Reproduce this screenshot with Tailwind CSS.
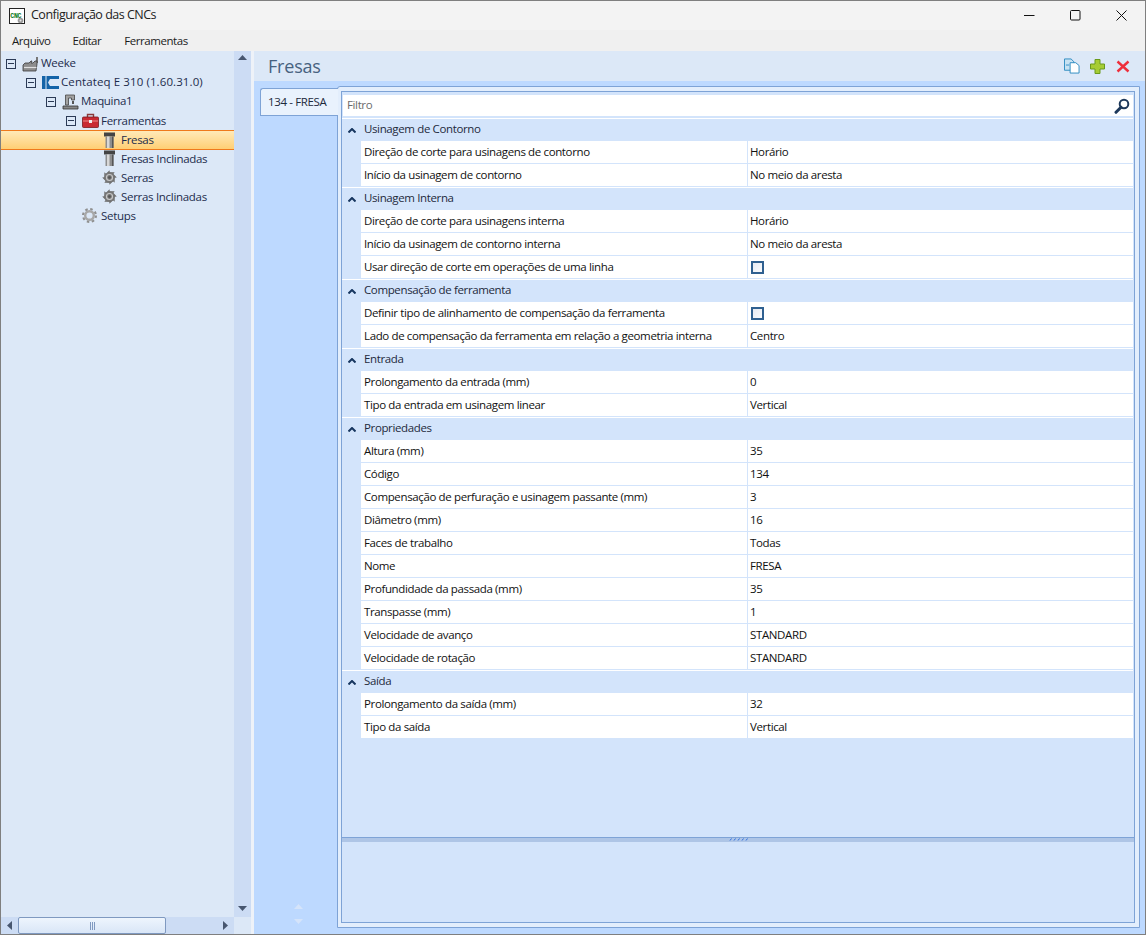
<!DOCTYPE html>
<html lang="pt">
<head>
<meta charset="UTF-8">
<title>Configuração das CNCs</title>
<script src="https://cdn.jsdelivr.net/npm/@tailwindcss/browser@4"></script>
</head>
<body class="bg-[#dce8f7]">
<div class="w-[1146px] h-[935px] flex flex-col overflow-hidden border border-[#7f7f7f] font-['Open_Sans',sans-serif] text-[11.5px] tracking-[-0.37px] text-[#1b1b1b]">

  <!-- title bar -->
  <div class="h-[29px] shrink-0 flex items-center bg-[#f3f3f3]">
    <svg class="ml-[8px] mr-[6px]" width="16" height="16" viewBox="0 0 16 16">
      <rect x="0.500" y="0.500" width="15" height="15" fill="#fff" stroke="#222"/>
      <text x="1.300" y="9.500" font-family="Liberation Mono" font-size="6.500" font-weight="700" fill="#0b7a22" letter-spacing="-0.300">CNC</text>
      <circle cx="11.500" cy="12.500" r="2.800" fill="#9a9a9a"/>
      <circle cx="11.500" cy="12.500" r="1" fill="#e8e8e8"/>
    </svg>
    <span class="text-[12.5px] tracking-[-0.5px] text-[#222]">Configuração das CNCs</span>
    <div class="ml-auto flex">
      <svg class="mr-[35px]" width="11" height="11" viewBox="0 0 11 11"><path d="M0 5.500h10.500" stroke="#111"/></svg>
      <svg class="mr-[35px]" width="11" height="11" viewBox="0 0 11 11"><rect x="0.500" y="0.500" width="9.500" height="9.500" rx="1" fill="none" stroke="#111"/></svg>
      <svg class="mr-[18px]" width="11" height="11" viewBox="0 0 11 11"><path d="M0.500 0.500l10 10M10.500 0.500l-10 10" stroke="#111"/></svg>
    </div>
  </div>

  <!-- menu -->
  <div class="h-[21px] shrink-0 flex items-center gap-[22px] pl-[11px] bg-[#f0f0f0] tracking-[-0.45px]">
    <span>Arquivo</span><span>Editar</span><span class="ml-px">Ferramentas</span>
  </div>

  <div class="flex-1 flex min-h-0">

    <!-- tree panel -->
    <div class="w-[250px] shrink-0 flex flex-col">
      <div class="flex-1 flex min-h-0">
        <div class="w-[233px] pt-[3px] text-[#1c2c4c] tracking-[-0.3px]">
          <div class="h-[19px] flex items-center pl-[5px]">
            <span class="w-[10px] h-[10px] border border-[#2b3a55] mr-[6px] flex items-center justify-center"><span class="w-[6px] h-px bg-[#2b3a55]"></span></span>
            <svg class="mr-[2px]" width="17" height="16" viewBox="0 0 17 16"><path d="M14 1h2v6h-2z" fill="#777"/><path d="M1 9l2-2h4l2-2h1l-1 2h2l2-2h2v3l-1 7H1z" fill="#8d8d8d" stroke="#3b3b3b" stroke-width="0.800"/><path d="M2 11.500h12.500" stroke="#e0e0e0" stroke-width="1.200"/></svg>
            <span class="pb-[2px]">Weeke</span>
          </div>
          <div class="h-[19px] flex items-center pl-[25px]">
            <span class="w-[10px] h-[10px] border border-[#2b3a55] mr-[6px] flex items-center justify-center"><span class="w-[6px] h-px bg-[#2b3a55]"></span></span>
            <svg class="mr-[2px]" width="17" height="13" viewBox="0 0 17 13"><rect width="3.500" height="13" fill="#1464a8"/><path d="M4.500 0H17v3H8L6 6.500 8 10h9v3H4.500z" fill="#1464a8"/></svg>
            <span class="pb-[2px] tracking-[0.1px]">Centateq E 310 (1.60.31.0)</span>
          </div>
          <div class="h-[19px] flex items-center pl-[45px]">
            <span class="w-[10px] h-[10px] border border-[#2b3a55] mr-[6px] flex items-center justify-center"><span class="w-[6px] h-px bg-[#2b3a55]"></span></span>
            <svg class="mr-[2px]" width="17" height="16" viewBox="0 0 17 16"><path d="M3.500 1h9v5h-3V4h-3v7h-3z" fill="#a2a2a2" stroke="#444" stroke-width="0.800"/><path d="M1 12h15v3H1z" fill="#888" stroke="#333" stroke-width="0.800"/><path d="M10 7h2v3h-2z" fill="#555"/></svg>
            <span class="pb-[2px]">Maquina1</span>
          </div>
          <div class="h-[19px] flex items-center pl-[65px]">
            <span class="w-[10px] h-[10px] border border-[#2b3a55] mr-[6px] flex items-center justify-center"><span class="w-[6px] h-px bg-[#2b3a55]"></span></span>
            <svg class="mr-[2px]" width="17" height="15" viewBox="0 0 17 15"><path d="M5.500 4V1.500h6V4" fill="none" stroke="#8a3a3a" stroke-width="1.400"/><rect x="0.500" y="4" width="16" height="10.500" rx="1" fill="#c92a32" stroke="#7a1a1f" stroke-width="0.800"/><path d="M1 8h15" stroke="#f08a8a"/><rect x="7" y="7" width="3" height="3" fill="#eee"/></svg>
            <span>Ferramentas</span>
          </div>
          <div class="h-[20px] flex items-center pl-[101px] border-y border-[#ef7a1c] bg-gradient-to-b from-[#ffeab8] to-[#ffcf73] -mb-px">
            <svg class="mr-[4px]" width="15" height="17" viewBox="0 0 15 17"><use href="#bit"/></svg>
            <span>Fresas</span>
          </div>
          <div class="h-[19px] flex items-center pl-[101px]">
            <svg class="mr-[4px]" width="15" height="17" viewBox="0 0 15 17"><use href="#bit"/></svg>
            <span>Fresas Inclinadas</span>
          </div>
          <div class="h-[19px] flex items-center pl-[101px]">
            <svg class="mr-[4px]" width="15" height="15" viewBox="0 0 15 15"><use href="#saw"/></svg>
            <span>Serras</span>
          </div>
          <div class="h-[19px] flex items-center pl-[101px]">
            <svg class="mr-[4px]" width="15" height="15" viewBox="0 0 15 15"><use href="#saw"/></svg>
            <span>Serras Inclinadas</span>
          </div>
          <div class="h-[19px] flex items-center pl-[81px]">
            <svg class="mr-[4px]" width="15" height="15" viewBox="0 0 15 15"><use href="#gear"/></svg>
            <span>Setups</span>
          </div>
        </div>
        <!-- vertical scrollbar -->
        <div class="w-[17px] bg-[#ccdcf4] flex flex-col items-center justify-between pt-[4px] pb-[6px]">
          <svg width="9" height="5" viewBox="0 0 9 5"><path d="M0 5L4.500 0 9 5z" fill="#47566f"/></svg>
          <svg width="9" height="5" viewBox="0 0 9 5"><path d="M0 0L4.500 5 9 0z" fill="#47566f"/></svg>
        </div>
      </div>
      <!-- horizontal scrollbar -->
      <div class="h-[17px] shrink-0 flex">
        <div class="w-[233px] bg-[#ccdcf4] flex items-center">
          <svg class="ml-[6px] mr-[6px]" width="5" height="9" viewBox="0 0 5 9"><path d="M5 0L0 4.500 5 9z" fill="#47566f"/></svg>
          <div class="w-[148px] h-[17px] border border-[#7f99c0] rounded-[2px] bg-gradient-to-b from-[#eef5fd] to-[#d9e6f7] flex items-center justify-center gap-[1px]">
            <span class="w-px h-[8px] bg-[#7f99c0]"></span><span class="w-px h-[8px] bg-[#7f99c0]"></span><span class="w-px h-[8px] bg-[#7f99c0]"></span>
          </div>
          <svg class="ml-auto mr-[6px]" width="5" height="9" viewBox="0 0 5 9"><path d="M0 0L5 4.500 0 9z" fill="#47566f"/></svg>
        </div>
        <div class="flex-1 bg-[#dce8f7]"></div>
      </div>
    </div>

    <!-- splitter -->
    <div class="w-[3px] shrink-0 bg-[#eef2f8]"></div>

    <!-- right panel -->
    <div class="flex-1 flex flex-col min-w-0">
      <div class="h-[30px] shrink-0 flex items-center pl-[14px] pr-[15px] bg-[#dce8f7]">
        <span class="text-[18px] tracking-[-0.2px] text-[#47627f]">Fresas</span>
        <div class="ml-auto flex items-center gap-[10px]">
          <svg width="16" height="16" viewBox="0 0 17 16"><path d="M0.500 0.500h7l3 3v9h-10z" fill="#c8e2f2" stroke="#2b8ac0"/><path d="M6.500 4.500h6l3.500 3v8h-9.500z" fill="#fff" stroke="#2b8ac0"/><path d="M2 6h4v2H2z" fill="#7cb8dc"/></svg>
          <svg width="15" height="15" viewBox="0 0 15 15"><path d="M5 0.500h5v4.500h4.500v5H10v4.500H5V10H0.500V5H5z" fill="#a6cc34" stroke="#6a9a1c"/></svg>
          <svg class="ml-px" width="14" height="13" viewBox="0 0 14 13"><path d="M1.500 1.500l11 10M12.500 1.500l-11 10" stroke="#ee2f3c" stroke-width="2.400"/></svg>
        </div>
      </div>

      <div class="flex-1 flex min-h-0 bg-[#bdd9ff] pt-[5px] pb-[6px] pr-[5px]">
        <!-- tabs column -->
        <div class="w-[83px] shrink-0 flex flex-col pl-[6px] pt-[2px] relative">
          <div class="h-[28px] -mr-px z-10 bg-[#e9f2fd] border border-r-0 border-[#7ea3d6] rounded-tl-[3px] flex items-center pl-[7px] text-[#1e2a3c]">134 - FRESA</div>
          <div class="mt-auto mb-[4px] flex flex-col items-center gap-[10px] pr-[0px]">
            <svg width="9" height="5" viewBox="0 0 9 5"><path d="M0 5L4.500 0 9 5z" fill="#d5e4fa"/></svg>
            <svg width="9" height="5" viewBox="0 0 9 5"><path d="M0 0L4.500 5 9 0z" fill="#d5e4fa"/></svg>
          </div>
        </div>

        <!-- tab page -->
        <div class="flex-1 min-w-0 border border-[#7ea3d6] rounded-tl-[3px] bg-[#e3eefc] pt-[4px] pl-[3px] pr-[4px] pb-[4px]">
          <div class="h-full border border-[#7ea3d6] bg-[#d3e4fb] flex flex-col">
            <div class="mx-px mt-[3px] h-[21px] shrink-0 bg-white flex items-center pl-[4px] pr-[3px] text-[#6b6b6b]">
              <span class="pb-[2px]">Filtro</span>
              <svg class="ml-auto" width="16" height="16" viewBox="0 0 16 16"><circle cx="10" cy="6" r="4.300" fill="#fff" stroke="#1e395b" stroke-width="2"/><path d="M7 9.200L2 14.300" stroke="#1e395b" stroke-width="3" stroke-linecap="round"/></svg>
            </div>

            <div class="mt-[2px] flex flex-col shrink-0 text-[#111] pr-px">
              <div class="h-[23px] flex items-center border-t border-white text-[#1e2a3c]"><svg class="mx-[6px]" width="8" height="5" viewBox="0 0 8 5"><path d="M0.500 4.500L4 1l3.500 3.500" fill="none" stroke="#17365f" stroke-width="2"/></svg><span class="ml-[2px] pb-[2px]">Usinagem de Contorno</span></div>
              <div class="h-[23px] ml-[19px] flex bg-white border-b border-[#d3e4fb]"><span class="w-[387px] pl-[3px] flex items-center border-r border-[#d3e4fb]">Direção de corte para usinagens de contorno</span><span class="pl-[2px] flex items-center">Horário</span></div>
              <div class="h-[23px] ml-[19px] flex bg-white border-b border-[#d3e4fb]"><span class="w-[387px] pl-[3px] flex items-center border-r border-[#d3e4fb]">Início da usinagem de contorno</span><span class="pl-[2px] flex items-center">No meio da aresta</span></div>

              <div class="h-[23px] flex items-center border-t border-white text-[#1e2a3c]"><svg class="mx-[6px]" width="8" height="5" viewBox="0 0 8 5"><path d="M0.500 4.500L4 1l3.500 3.500" fill="none" stroke="#17365f" stroke-width="2"/></svg><span class="ml-[2px] pb-[2px]">Usinagem Interna</span></div>
              <div class="h-[23px] ml-[19px] flex bg-white border-b border-[#d3e4fb]"><span class="w-[387px] pl-[3px] flex items-center border-r border-[#d3e4fb]">Direção de corte para usinagens interna</span><span class="pl-[2px] flex items-center">Horário</span></div>
              <div class="h-[23px] ml-[19px] flex bg-white border-b border-[#d3e4fb]"><span class="w-[387px] pl-[3px] flex items-center border-r border-[#d3e4fb]">Início da usinagem de contorno interna</span><span class="pl-[2px] flex items-center">No meio da aresta</span></div>
              <div class="h-[23px] ml-[19px] flex bg-white border-b border-[#d3e4fb]"><span class="w-[387px] pl-[3px] flex items-center border-r border-[#d3e4fb]">Usar direção de corte em operações de uma linha</span><span class="pl-[3px] flex items-center"><span class="block w-[13px] h-[13px] border-2 border-[#2f6090] bg-gradient-to-br from-[#e6eaf2] to-[#f8fafd]"></span></span></div>

              <div class="h-[23px] flex items-center border-t border-white text-[#1e2a3c]"><svg class="mx-[6px]" width="8" height="5" viewBox="0 0 8 5"><path d="M0.500 4.500L4 1l3.500 3.500" fill="none" stroke="#17365f" stroke-width="2"/></svg><span class="ml-[2px] pb-[2px]">Compensação de ferramenta</span></div>
              <div class="h-[23px] ml-[19px] flex bg-white border-b border-[#d3e4fb]"><span class="w-[387px] pl-[3px] flex items-center border-r border-[#d3e4fb]">Definir tipo de alinhamento de compensação da ferramenta</span><span class="pl-[3px] flex items-center"><span class="block w-[13px] h-[13px] border-2 border-[#2f6090] bg-gradient-to-br from-[#e6eaf2] to-[#f8fafd]"></span></span></div>
              <div class="h-[23px] ml-[19px] flex bg-white border-b border-[#d3e4fb]"><span class="w-[387px] pl-[3px] flex items-center border-r border-[#d3e4fb]">Lado de compensação da ferramenta em relação a geometria interna</span><span class="pl-[2px] flex items-center">Centro</span></div>

              <div class="h-[23px] flex items-center border-t border-white text-[#1e2a3c]"><svg class="mx-[6px]" width="8" height="5" viewBox="0 0 8 5"><path d="M0.500 4.500L4 1l3.500 3.500" fill="none" stroke="#17365f" stroke-width="2"/></svg><span class="ml-[2px] pb-[2px]">Entrada</span></div>
              <div class="h-[23px] ml-[19px] flex bg-white border-b border-[#d3e4fb]"><span class="w-[387px] pl-[3px] flex items-center border-r border-[#d3e4fb]">Prolongamento da entrada (mm)</span><span class="pl-[2px] flex items-center">0</span></div>
              <div class="h-[23px] ml-[19px] flex bg-white border-b border-[#d3e4fb]"><span class="w-[387px] pl-[3px] flex items-center border-r border-[#d3e4fb]">Tipo da entrada em usinagem linear</span><span class="pl-[2px] flex items-center">Vertical</span></div>

              <div class="h-[23px] flex items-center border-t border-white text-[#1e2a3c]"><svg class="mx-[6px]" width="8" height="5" viewBox="0 0 8 5"><path d="M0.500 4.500L4 1l3.500 3.500" fill="none" stroke="#17365f" stroke-width="2"/></svg><span class="ml-[2px] pb-[2px]">Propriedades</span></div>
              <div class="h-[23px] ml-[19px] flex bg-white border-b border-[#d3e4fb]"><span class="w-[387px] pl-[3px] flex items-center border-r border-[#d3e4fb]">Altura (mm)</span><span class="pl-[2px] flex items-center">35</span></div>
              <div class="h-[23px] ml-[19px] flex bg-white border-b border-[#d3e4fb]"><span class="w-[387px] pl-[3px] flex items-center border-r border-[#d3e4fb]">Código</span><span class="pl-[2px] flex items-center">134</span></div>
              <div class="h-[23px] ml-[19px] flex bg-white border-b border-[#d3e4fb]"><span class="w-[387px] pl-[3px] flex items-center border-r border-[#d3e4fb]">Compensação de perfuração e usinagem passante (mm)</span><span class="pl-[2px] flex items-center">3</span></div>
              <div class="h-[23px] ml-[19px] flex bg-white border-b border-[#d3e4fb]"><span class="w-[387px] pl-[3px] flex items-center border-r border-[#d3e4fb]">Diâmetro (mm)</span><span class="pl-[2px] flex items-center">16</span></div>
              <div class="h-[23px] ml-[19px] flex bg-white border-b border-[#d3e4fb]"><span class="w-[387px] pl-[3px] flex items-center border-r border-[#d3e4fb]">Faces de trabalho</span><span class="pl-[2px] flex items-center">Todas</span></div>
              <div class="h-[23px] ml-[19px] flex bg-white border-b border-[#d3e4fb]"><span class="w-[387px] pl-[3px] flex items-center border-r border-[#d3e4fb]">Nome</span><span class="pl-[2px] flex items-center">FRESA</span></div>
              <div class="h-[23px] ml-[19px] flex bg-white border-b border-[#d3e4fb]"><span class="w-[387px] pl-[3px] flex items-center border-r border-[#d3e4fb]">Profundidade da passada (mm)</span><span class="pl-[2px] flex items-center">35</span></div>
              <div class="h-[23px] ml-[19px] flex bg-white border-b border-[#d3e4fb]"><span class="w-[387px] pl-[3px] flex items-center border-r border-[#d3e4fb]">Transpasse (mm)</span><span class="pl-[2px] flex items-center">1</span></div>
              <div class="h-[23px] ml-[19px] flex bg-white border-b border-[#d3e4fb]"><span class="w-[387px] pl-[3px] flex items-center border-r border-[#d3e4fb]">Velocidade de avanço</span><span class="pl-[2px] flex items-center">STANDARD</span></div>
              <div class="h-[23px] ml-[19px] flex bg-white border-b border-[#d3e4fb]"><span class="w-[387px] pl-[3px] flex items-center border-r border-[#d3e4fb]">Velocidade de rotação</span><span class="pl-[2px] flex items-center">STANDARD</span></div>

              <div class="h-[23px] flex items-center border-t border-white text-[#1e2a3c]"><svg class="mx-[6px]" width="8" height="5" viewBox="0 0 8 5"><path d="M0.500 4.500L4 1l3.500 3.500" fill="none" stroke="#17365f" stroke-width="2"/></svg><span class="ml-[2px] pb-[2px]">Saída</span></div>
              <div class="h-[23px] ml-[19px] flex bg-white border-b border-[#d3e4fb]"><span class="w-[387px] pl-[3px] flex items-center border-r border-[#d3e4fb]">Prolongamento da saída (mm)</span><span class="pl-[2px] flex items-center">32</span></div>
              <div class="h-[23px] ml-[19px] flex bg-white border-b border-[#d3e4fb]"><span class="w-[387px] pl-[3px] flex items-center border-r border-[#d3e4fb]">Tipo da saída</span><span class="pl-[2px] flex items-center">Vertical</span></div>
            </div>

            <div class="flex-1"></div>
            <!-- description splitter -->
            <div class="h-[5px] shrink-0 border-t border-[#7ea3d6] bg-[#aec5e6] flex justify-center">
              <svg width="19" height="3" viewBox="0 0 19 3"><path d="M1 2.500l1.500-2M5 2.500l1.500-2M9 2.500l1.500-2M13 2.500l1.500-2M17 2.500l1.500-2" stroke="#2f6fe0"/></svg>
            </div>
            <div class="h-[80px] shrink-0"></div>
          </div>
        </div>
      </div>
    </div>
  </div>
</div>

<svg width="0" height="0" class="absolute">
  <defs>
    <g id="bit">
      <rect x="2" y="0.500" width="11" height="4" fill="#444"/>
      <path d="M3.500 4.500h8V16h-8z" fill="#8e8e8e"/>
      <path d="M5 4.500h2.500V16H5z" fill="#d8d8d8"/>
      <path d="M10 4.500h1.500V16H10z" fill="#555"/>
    </g>
    <g id="saw">
      <polygon points="14.800,7.500 12.700,7.800 12.660,12.660 10.980,11.360 7.500,14.800 7.230,12.690 2.340,12.660 3.640,10.980 0.200,7.500 2.310,7.230 2.340,2.340 4.020,3.640 7.500,0.200 7.770,2.310 12.660,2.340 11.360,4.020" fill="#6a6a6a"/>
      <circle cx="7.500" cy="7.500" r="5.200" fill="#777"/>
      <circle cx="7.500" cy="7.500" r="3" fill="none" stroke="#c8c8c8" stroke-width="1.200"/>
      <circle cx="7.500" cy="7.500" r="1.300" fill="#555"/>
    </g>
    <g id="gear">
      <circle cx="7.500" cy="7.500" r="4.300" fill="none" stroke="#a8a8a8" stroke-width="2.400"/>
      <circle cx="7.500" cy="7.500" r="6.500" fill="none" stroke="#8f8f8f" stroke-width="2" stroke-dasharray="2.500 2.600"/>
    </g>
  </defs>
</svg>
</body>
</html>
